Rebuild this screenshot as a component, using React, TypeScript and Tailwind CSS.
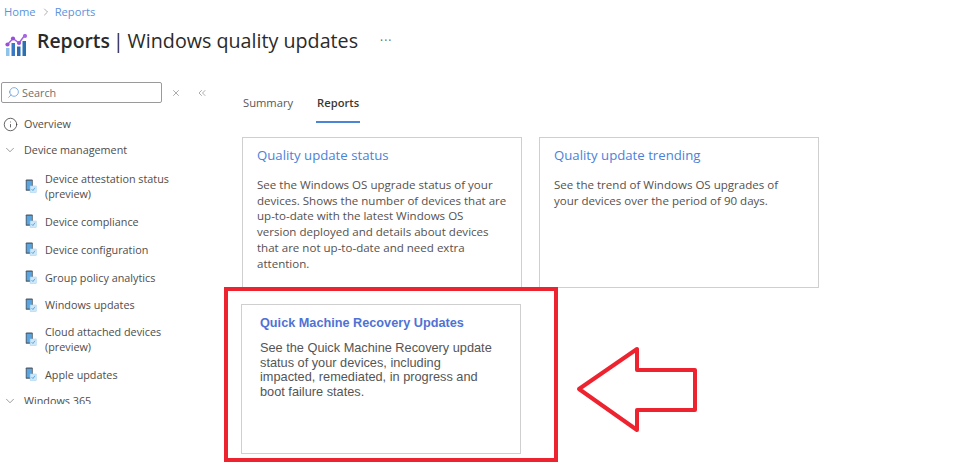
import { ChevronDown, ChevronRight, ChevronsLeft, Info, Search, X } from "lucide-react";

const font = "font-['Open_Sans','Noto_Sans',sans-serif]";

const ReportsIcon = () => (
  <svg width="23" height="22" viewBox="0 0 23 22" className="shrink-0">
    <rect x="1" y="14" width="3.5" height="8" fill="#8ec4ea" />
    <rect x="6.5" y="9" width="3.5" height="13" fill="#3b78c4" />
    <rect x="12" y="12.5" width="3.5" height="9.5" fill="#2f6cb5" />
    <rect x="17.5" y="7" width="3.5" height="15" fill="#2b70b0" />
    <path d="M2.5 10.5 8 4.5l6 4.5 6-8" fill="none" stroke="#a05fdc" strokeWidth="1.4" />
    <circle cx="2.5" cy="10.5" r="2.1" fill="#9a4fd8" />
    <circle cx="8" cy="4.5" r="2.1" fill="#9a4fd8" />
    <circle cx="14" cy="9" r="2.1" fill="#9a4fd8" />
    <circle cx="20" cy="2" r="2.1" fill="#a866e6" />
  </svg>
);

const DeviceIcon = () => (
  <svg width="12" height="14" viewBox="0 0 13 16" className="shrink-0">
    <rect x="0.5" y="0.5" width="8" height="13" rx="1" fill="#4d5a66" />
    <rect x="1.5" y="2" width="6" height="10" fill="#5aa5e0" />
    <rect x="5.5" y="8" width="7" height="7.5" fill="#cfe7f7" stroke="#a6d2ef" strokeWidth="0.6" />
    <path d="M7.2 11.6 8.7 13.2 11 10" fill="none" stroke="#5aa5e0" strokeWidth="1.1" />
  </svg>
);

const NavItem = ({ label, rowClass }: { label: React.ReactNode; rowClass: string }) => (
  <div className={`flex items-center pl-[25px] ${rowClass}`}>
    <DeviceIcon />
    <span className="ml-[8px] leading-[15px]">{label}</span>
  </div>
);

const ReportCard = ({ title, children }: { title: string; children: React.ReactNode }) => (
  <div className="w-[280px] h-[151px] border border-[#cfcfcf] bg-white pl-[14px] pt-[8px]">
    <h3 className="text-[13.2px] leading-[18px] text-[#4b82d8]">{title}</h3>
    <p className="mt-[13px] text-[11.55px] leading-[15.7px] text-[#55514e] whitespace-nowrap">{children}</p>
  </div>
);

export default function App() {
  return (
    <div className={`relative w-[956px] h-[476px] overflow-hidden bg-white ${font}`}>
      <nav className="flex items-center h-[24px] pl-[4px] text-[11.2px] text-[#5a93dd]">
        <span>Home</span>
        <ChevronRight size={12} strokeWidth={1.2} className="ml-[4px] mr-[3px] text-[#777]" />
        <span>Reports</span>
      </nav>

      <header className="flex items-center h-[34px] pl-[5px]">
        <div className="mt-[7px]">
          <ReportsIcon />
        </div>
        <h1 className="ml-[9px] text-[19.4px] leading-[28px] text-[#2b2a29] whitespace-nowrap">
          <span className="font-semibold">Reports</span>
          <span className="ml-[3px]">|</span>
          <span className="ml-[4px] text-[19.7px]">Windows quality updates</span>
        </h1>
        <span className="ml-[22px] text-[12px] tracking-[1px] text-[#666]">···</span>
      </header>

      <div className="flex mt-[24px]">
        <aside className="w-[242px] shrink-0 text-[10.8px] text-[#4f4c4a]">
          <div className="flex items-center h-[21px]">
            <div className="ml-[1px] w-[161px] h-[21px] flex items-center border border-[#9a9a9a] rounded-[2px] pl-[5px]">
              <Search size={13} strokeWidth={1.2} className="text-[#3f87d6] -scale-x-100" />
              <span className="ml-[2px] mt-[1px] text-[#6f6f6f]">Search</span>
            </div>
            <X size={10} strokeWidth={1.3} className="ml-[9px] text-[#666]" />
            <ChevronsLeft size={12} strokeWidth={1.1} className="ml-[15px] text-[#666]" />
          </div>

          <div className="h-[294px] overflow-hidden mt-[7px]">
            <div className="flex items-center h-[28px]">
              <Info size={15} strokeWidth={1.2} className="ml-[3px] text-[#333]" />
              <span className="ml-[6px]">Overview</span>
            </div>
            <div className="flex items-center h-[24px]">
              <ChevronDown size={14} strokeWidth={1} className="ml-[3px] text-[#555]" />
              <span className="ml-[7px]">Device management</span>
            </div>
            <NavItem rowClass="h-[40px] mt-[4px]" label={<>Device attestation status<br />(preview)</>} />
            <NavItem rowClass="h-[28px] mt-[1px]" label="Device compliance" />
            <NavItem rowClass="h-[28px]" label="Device configuration" />
            <NavItem rowClass="h-[28px]" label="Group policy analytics" />
            <NavItem rowClass="h-[27px]" label="Windows updates" />
            <NavItem rowClass="h-[40px] mt-[1px]" label={<>Cloud attached devices<br />(preview)</>} />
            <NavItem rowClass="h-[16px] mt-[7px]" label="Apple updates" />
            <div className="flex items-center h-[24px] mt-[7px]">
              <ChevronDown size={14} strokeWidth={1} className="ml-[3px] text-[#555]" />
              <span className="ml-[7px]">Windows 365</span>
            </div>
          </div>
        </aside>

        <main className="flex-1">
          <div className="flex h-[41px] text-[11.2px]">
            <span className="pt-[13px] pl-[1px] text-[#5a5654]">Summary</span>
            <span className="ml-[23px] h-[41px] pt-[13px] px-[1px] border-b-2 border-[#4a86d4] font-semibold text-[#3a3735]">
              Reports
            </span>
          </div>

          <div className="flex gap-[17px] mt-[14px]">
            <ReportCard title="Quality update status">
              See the Windows OS upgrade status of your<br />
              devices. Shows the number of devices that are<br />
              up-to-date with the latest Windows OS<br />
              version deployed and details about devices<br />
              that are not up-to-date and need extra<br />
              attention.
            </ReportCard>
            <ReportCard title="Quality update trending">
              See the trend of Windows OS upgrades of<br />
              your devices over the period of 90 days.
            </ReportCard>
          </div>

          <div className="w-[280px] h-[150px] -ml-[1px] mt-[16px] border border-[#cfcfcf] bg-white pl-[18px] pt-[9px] font-['Liberation_Sans',sans-serif]">
            <h3 className="text-[12.7px] leading-[18px] font-bold text-[#4f72d4]">
              Quick Machine Recovery Updates
            </h3>
            <p className="mt-[9px] text-[12.75px] leading-[14.5px] text-[#555555] whitespace-nowrap">
              See the Quick Machine Recovery update<br />
              status of your devices, including<br />
              impacted, remediated, in progress and<br />
              boot failure states.
            </p>
          </div>
        </main>
      </div>

      <div className="absolute left-[224px] top-[287px] w-[334px] h-[175px] border-4 border-[#ee2330]" />
      <svg className="absolute left-[570px] top-[340px]" width="135" height="98" viewBox="0 0 135 98">
        <path
          d="M9 49 67 9V30H125V70H67V90Z"
          fill="none"
          stroke="#ee2330"
          strokeWidth="4"
          strokeLinejoin="round"
        />
      </svg>
    </div>
  );
}
